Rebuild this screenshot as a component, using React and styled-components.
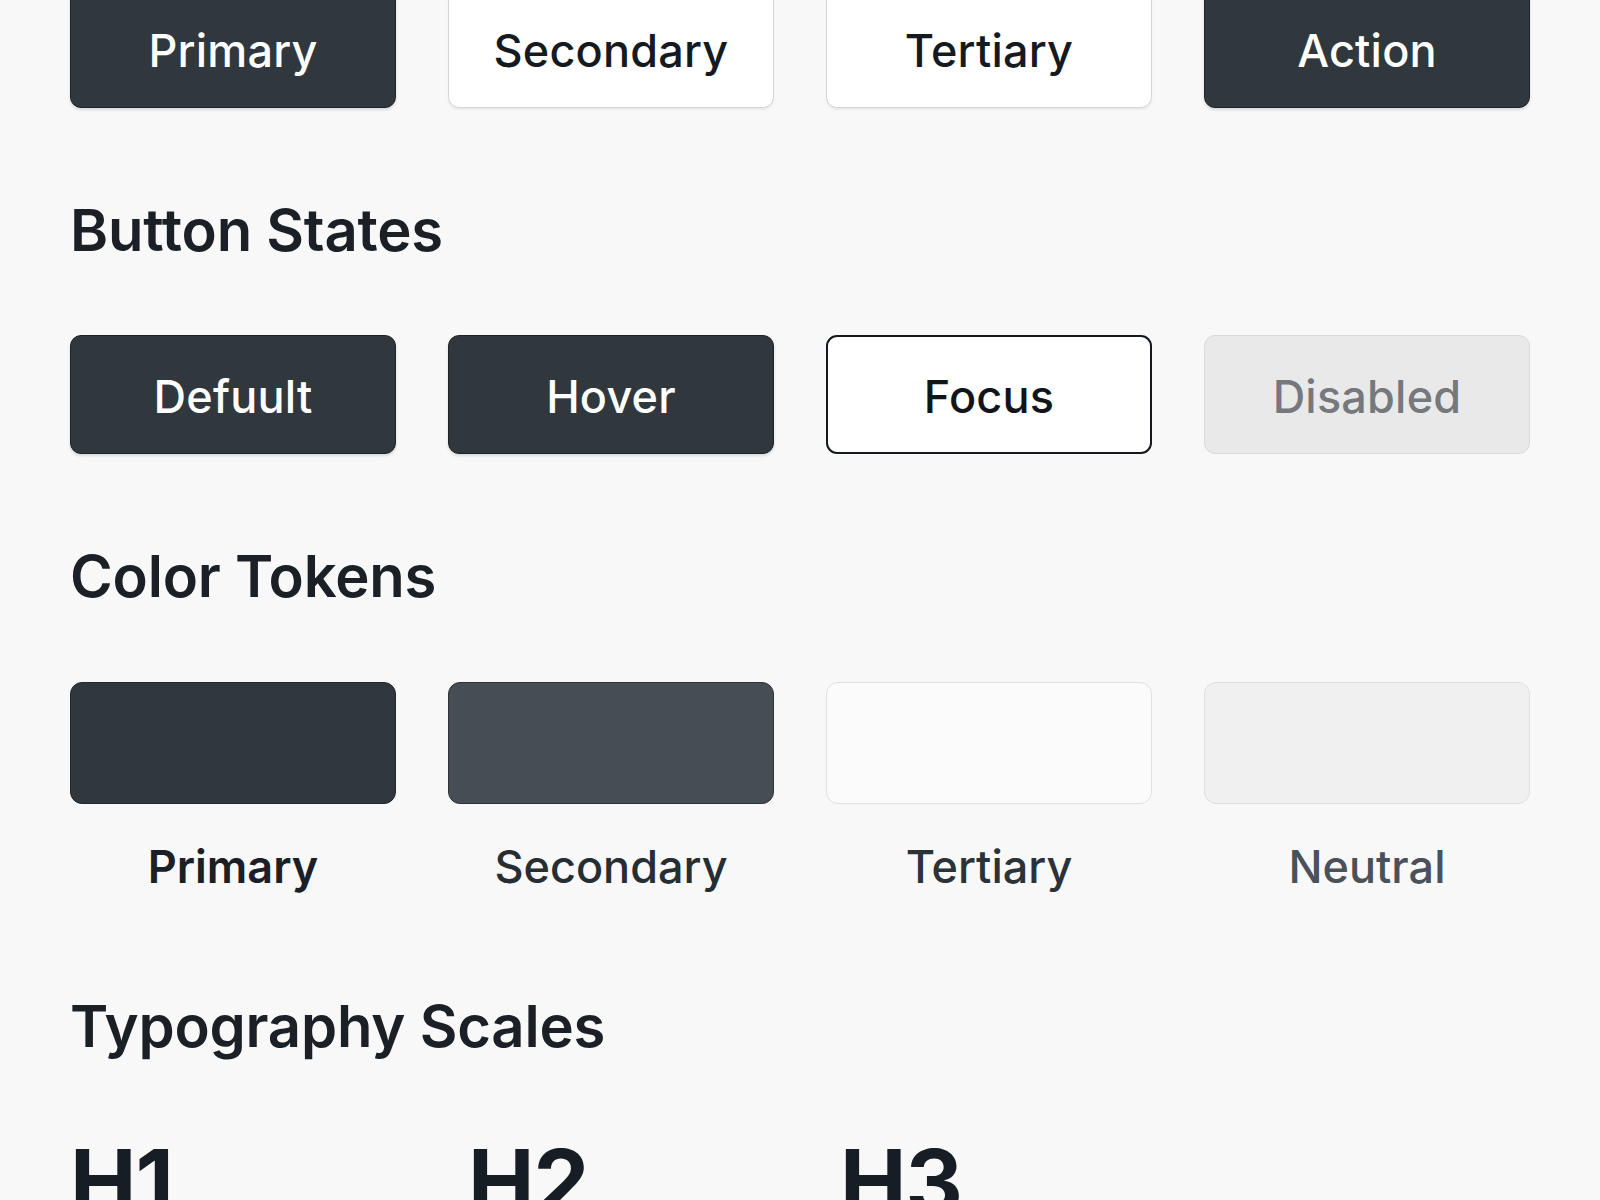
import React from "react";
import styled, { createGlobalStyle, css } from "styled-components";

const Global = createGlobalStyle`
  html, body {
    margin: 0;
    padding: 0;
    background: #f8f8f8;
  }
  body {
    font-family: Inter, "Noto Sans", "Liberation Sans", sans-serif;
    color: #1b2026;
    overflow: hidden;
  }
`;

const Page = styled.div`
  width: 1461px;
  padding: 0 69px 0 70px;
  height: 1200px;
  overflow: hidden;
  display: flex;
  flex-direction: column;
`;

const Grid = styled.div`
  display: grid;
  grid-template-columns: repeat(4, 326px);
  column-gap: 52px;
  margin-top: ${(p) => p.$top}px;
`;

const variants = {
  dark: css`
    background: #30373d;
    color: #ffffff;
    border: 1.5px solid #1e2328;
    box-shadow: 0 2px 3px rgba(0, 0, 0, 0.12);
  `,
  light: css`
    background: #ffffff;
    color: #151a1f;
    border: 1.5px solid #d5d5d5;
    box-shadow: 0 2px 2px rgba(0, 0, 0, 0.06);
  `,
  focus: css`
    background: #ffffff;
    color: #111519;
    border: 2px solid #15191d;
  `,
  disabled: css`
    background: #e9e9ea;
    color: #75797e;
    border: 1.5px solid #dadadb;
  `,
};

const Button = styled.div`
  box-sizing: border-box;
  height: 119px;
  padding-top: 4px;
  border-radius: 11px;
  display: flex;
  align-items: center;
  justify-content: center;
  font-size: 45px;
  font-weight: 500;
  letter-spacing: 0.2px;
  ${(p) => variants[p.$variant]}
`;

const Heading = styled.h2`
  margin: ${(p) => p.$top}px 0 0 0;
  font-size: 58px;
  line-height: 58px;
  font-weight: 600;
  color: #1b2026;
  letter-spacing: -0.2px;
`;

const Swatch = styled.div`
  box-sizing: border-box;
  height: 122px;
  border-radius: 12px;
  background: ${(p) => p.$bg};
  border: 1.5px solid ${(p) => p.$border};
`;

const Label = styled.div`
  margin-top: 40px;
  text-align: center;
  font-size: 45px;
  line-height: 45px;
  font-weight: ${(p) => p.$weight};
  color: ${(p) => p.$color};
`;

const TokenCol = styled.div`
  display: flex;
  flex-direction: column;
`;

const TypeRow = styled.div`
  display: grid;
  grid-template-columns: 398px 372px auto;
  margin-top: 82px;
`;

const TypeSample = styled.div`
  font-size: 89px;
  line-height: 89px;
  font-weight: 700;
  color: #161d24;
  letter-spacing: -1px;
`;

const buttons = [
  { label: "Primary", v: "dark" },
  { label: "Secondary", v: "light" },
  { label: "Tertiary", v: "light" },
  { label: "Action", v: "dark" },
];

const states = [
  { label: "Defuult", v: "dark" },
  { label: "Hover", v: "dark" },
  { label: "Focus", v: "focus" },
  { label: "Disabled", v: "disabled" },
];

const tokens = [
  { label: "Primary", bg: "#31383d", border: "#22272c", color: "#1b2026", w: 600 },
  { label: "Secondary", bg: "#464d53", border: "#2d3338", color: "#262d33", w: 500 },
  { label: "Tertiary", bg: "#fbfbfb", border: "#e0e0e0", color: "#2b3238", w: 500 },
  { label: "Neutral", bg: "#f0f0f0", border: "#e0e0e0", color: "#4a5158", w: 500 },
];

export default function App() {
  return (
    <>
      <Global />
      <Page>
        <Grid $top={-11}>
          {buttons.map((b) => (
            <Button key={b.label} $variant={b.v}>
              {b.label}
            </Button>
          ))}
        </Grid>

        <Heading $top={93}>Button States</Heading>
        <Grid $top={76}>
          {states.map((b) => (
            <Button key={b.label} $variant={b.v}>
              {b.label}
            </Button>
          ))}
        </Grid>

        <Heading $top={93}>Color Tokens</Heading>
        <Grid $top={77}>
          {tokens.map((t) => (
            <TokenCol key={t.label}>
              <Swatch $bg={t.bg} $border={t.border} />
              <Label $color={t.color} $weight={t.w}>
                {t.label}
              </Label>
            </TokenCol>
          ))}
        </Grid>

        <Heading $top={108}>Typography Scales</Heading>
        <TypeRow>
          <TypeSample>H1</TypeSample>
          <TypeSample>H2</TypeSample>
          <TypeSample>H3</TypeSample>
        </TypeRow>
      </Page>
    </>
  );
}
